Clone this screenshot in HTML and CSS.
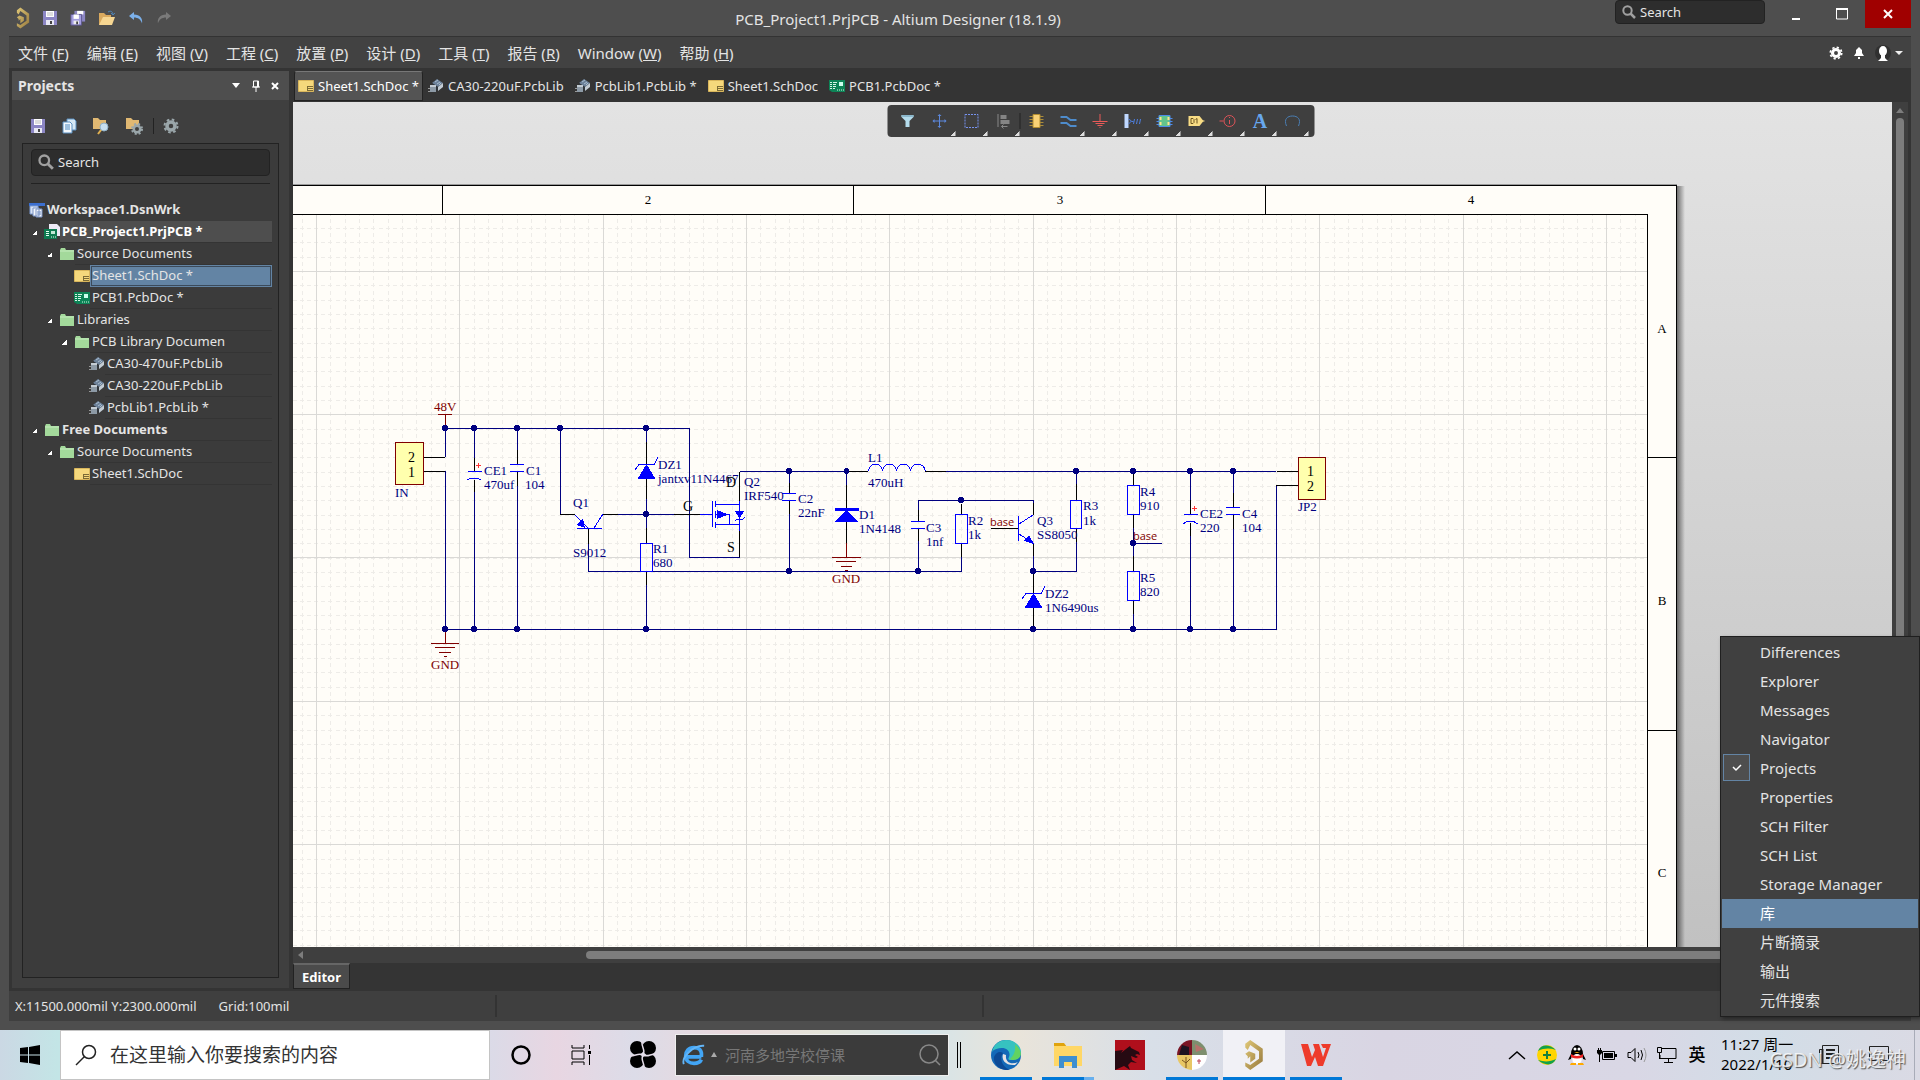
FILE: index.html
```html
<!DOCTYPE html>
<html lang="zh-CN">
<head>
	<meta charset="utf-8">
	<title>PCB_Project1.PrjPCB - Altium Designer (18.1.9)</title>
	<link rel="stylesheet" href="styles.css">
</head>
<body>
	<!-- shared icons -->
	<svg class="defs" width="0" height="0">
		<linearGradient id="gold" x1="0" y1="0" x2="1" y2="1"><stop offset="0" stop-color="#e0c878"/><stop offset="1" stop-color="#96783c"/></linearGradient>
		<symbol id="altium" viewBox="0 0 16 24"><path d="M1 6V3l4-3 10 7v10L5 24l-4-3v-3l4 2 7-5V9L5 4 3 8zM1 11l3-2 5 2v4l-4 3v-5l-2 2v-2z" fill="url(#gold)"/></symbol>
		<symbol id="save" viewBox="0 0 16 16"><path d="M1 1h14v14H1z" fill="#8c86c4"/><path d="M4 1h8v6H4z" fill="#fff"/><path d="M4 10h8v5H4z" fill="#e8e8f4"/><path d="M8 11h2v3H8z" fill="#444"/><path d="M5 3h6M5 5h6" stroke="#bbb"/></symbol>
		<symbol id="saveall" viewBox="0 0 18 18"><path d="M5 1h12v12H5z" fill="#8c86c4"/><path d="M8 1h7v4H8z" fill="#fff"/><path d="M1 5h12v12H1z" fill="#a49ee0" stroke="#5a568c"/><path d="M4 5h6v5H4z" fill="#fff"/><path d="M4 12h6v4H4z" fill="#eee"/><path d="M7 13h2v3H7z" fill="#444"/></symbol>
		<symbol id="open" viewBox="0 0 18 16"><path d="M1 15V3h5l2 2h5v3" fill="#d9a95e"/><path d="M1 15l4-8h12l-3 8z" fill="#f6d692"/><path d="M10 2c3-2 5 0 5 3m-2-2l2 2 2-2" fill="none" stroke="#4d83b5"/></symbol>
		<symbol id="undo" viewBox="0 0 16 14"><path d="M6 1L1 5l5 4V6.500c4 0 7 2 8 6 1-5-2-9-8-9z" fill="#7bb0ea"/></symbol>
		<symbol id="redo" viewBox="0 0 16 14"><path d="M10 1l5 4-5 4V6.500c-4 0-7 2-8 6-1-5 2-9 8-9z" fill="#7a7a7a"/></symbol>
		<symbol id="mag" viewBox="0 0 14 14"><circle cx="5.500" cy="5.500" r="4.200" fill="none" stroke="#a0a0a0" stroke-width="2"/><path d="M8.500 8.500l4.500 4.500" stroke="#a0a0a0" stroke-width="2.500"/></symbol>
		<symbol id="docs" viewBox="0 0 16 16"><path d="M6 1h7l2 2v9H6z" fill="#d5e8f5" stroke="#5b8fc0"/><path d="M2 4h7l2 2v9H2z" fill="#f2f8fd" stroke="#5b8fc0"/><path d="M4 7h5M4 9h5M4 11h5" stroke="#4a87be"/></symbol>
		<symbol id="fmag" viewBox="0 0 18 18"><path d="M1 12V1h5l2 2h6v9z" fill="#e0b872"/><circle cx="12" cy="10" r="4" fill="#c8dff0" stroke="#8fb0c8"/><path d="M9 13l-3 4" stroke="#e0b050" stroke-width="2"/></symbol>
		<symbol id="fgear" viewBox="0 0 18 18"><path d="M1 12V1h5l2 2h6v9z" fill="#e0b872"/><circle cx="12" cy="12" r="4.500" fill="#9aa6aa"/><circle cx="12" cy="12" r="5" fill="none" stroke="#9aa6aa" stroke-width="2" stroke-dasharray="2 2"/><circle cx="12" cy="12" r="2" fill="#3f3f3f"/></symbol>
		<symbol id="gear" viewBox="0 0 16 16"><circle cx="8" cy="8" r="4" fill="none" stroke="currentColor" stroke-width="3.500"/><circle cx="8" cy="8" r="6.500" fill="none" stroke="currentColor" stroke-width="2" stroke-dasharray="2.600 2.500"/></symbol>
		<symbol id="sch" viewBox="0 0 16 12"><path d="M.5.5h15v11H.5z" fill="#f5d87c" stroke="#d9b65c"/><path d="M9 6h6v5H9z" fill="#7b6a35"/><path d="M10 7.500h5M10 9.500h5" stroke="#f5d87c"/></symbol>
		<symbol id="pcb" viewBox="0 0 16 12"><path d="M0 0h16v12H3L0 10z" fill="#0d8457"/><path d="M1 2.500h2m1 0h4M1 4.500h2m1 0h3M1 6.500h2m1 0h3M1 8.500h2m1 0h2M8 10h1m1 0h1m1 0h1m1 0h1" stroke="#d6f5e6"/><path d="M10 2h4v4h-4z" fill="#cfe"/></symbol>
		<symbol id="lib" viewBox="0 0 16 14"><path d="M4 4l5-4 6 4-5 4z" fill="#6c8199"/><path d="M7 3l3-2M9 5l3-2M11 6l2-2" stroke="#a9bdd0"/><path d="M4 4l6 4v4L4 8z" fill="#30363c"/><path d="M10 8l5-4v4l-5 4z" fill="#c3ccd4"/><path d="M2 6h6v7H2z" fill="#8d9aa6"/><path d="M2 6h6v2H2z" fill="#c3ccd4"/><path d="M0 9.500h2M0 12.500h2" stroke="#999"/></symbol>
		<symbol id="folder" viewBox="0 0 16 12"><path d="M1 12V2l1-2h4l1 2h8v10z" fill="#a3d99b"/><path d="M1 3h14" stroke="#c5ecbf"/></symbol>
		<symbol id="wrk" viewBox="0 0 16 16"><path d="M0 1h16v3H0z" fill="#3b6fd0"/><path d="M1 4h8v8H1z" fill="#d7e3f5" stroke="#7d9ad0"/><path d="M4 6h6v8H4zM7 7h6v8H7z" fill="#f3f7fd" stroke="#7b93c4"/><path d="M8 10h4M8 12h4" stroke="#6d8ac0"/></symbol>
		<symbol id="prj" viewBox="0 0 16 16"><path d="M5 0h8l3 3v9H5z" fill="#ece9f5"/><path d="M0 5h13v10H0z" fill="#0d7a50"/><path d="M2 7.500h3M2 9.500h3M2 11.500h3M7 13h1m1 0h1m1 0h1" stroke="#e6fff3"/><path d="M7 7h4v3H7z" fill="#bfe8d5"/></symbol>
	</svg>

	<div class="window">
		<header class="titlebar">
			<div class="quick">
				<svg width="14" height="24"><use href="#altium"/></svg>
				<button aria-label="Save"><svg width="16" height="16"><use href="#save"/></svg></button>
				<button aria-label="Save all"><svg width="16" height="18"><use href="#saveall"/></svg></button>
				<button aria-label="Open"><svg width="18" height="16"><use href="#open"/></svg></button>
				<button aria-label="Undo"><svg width="16" height="14"><use href="#undo"/></svg></button>
				<button aria-label="Redo"><svg width="16" height="14"><use href="#redo"/></svg></button>
			</div>
			<h1>PCB_Project1.PrjPCB - Altium Designer (18.1.9)</h1>
			<div class="title-right">
				<label class="search top-search"><svg width="14" height="14"><use href="#mag"/></svg><input type="text" placeholder="Search" aria-label="Search"></label>
				<button class="win" aria-label="Minimize"><svg width="12" height="12"><path d="M2 11h8" stroke="#fff" stroke-width="2"/></svg></button>
				<button class="win" aria-label="Maximize"><svg width="12" height="12"><path d="M.5 1h11v10H.5z" fill="none" stroke="#fff"/><path d="M0 1h12" stroke="#fff" stroke-width="2"/></svg></button>
				<button class="win close" aria-label="Close"><svg width="12" height="12"><path d="M2 2l8 8M10 2l-8 8" stroke="#fff" stroke-width="2"/></svg></button>
			</div>
		</header>

		<nav class="menubar">
			<button>文件 (<u>F</u>)</button>
			<button>编辑 (<u>E</u>)</button>
			<button>视图 (<u>V</u>)</button>
			<button>工程 (<u>C</u>)</button>
			<button>放置 (<u>P</u>)</button>
			<button>设计 (<u>D</u>)</button>
			<button>工具 (<u>T</u>)</button>
			<button>报告 (<u>R</u>)</button>
			<button>Window (<u>W</u>)</button>
			<button>帮助 (<u>H</u>)</button>
			<div class="account">
				<svg width="14" height="14"><use href="#gear"/></svg>
				<svg width="12" height="14" viewBox="0 0 12 14"><path d="M1 10h10L9 7V4L6 1 3 4v3zM5 11h2v2H5z" fill="#fff"/></svg>
				<svg width="28" height="16" viewBox="0 0 28 16"><circle cx="8" cy="8" r="8" fill="#303030"/><ellipse cx="8" cy="6" rx="4" ry="5" fill="#fff"/><path d="M6 9h4v4l3 3H3l3-3z" fill="#fff"/><path d="M20 6h8l-4 4z" fill="#eee"/></svg>
			</div>
		</nav>

		<main class="work">
			<aside class="panel">
				<div class="panel-head">
					<h2>Projects</h2>
					<svg width="48" height="12" viewBox="0 0 48 12"><path d="M1 3h8L5 8z" fill="#fff"/><path d="M21 7h8M25 7v5M22.500 1h5v6h-5z" fill="none" stroke="#fff"/><path d="M26.500 1v6" stroke="#fff"/><path d="M41 3l6 6M47 3l-6 6" stroke="#fff" stroke-width="2"/></svg>
				</div>
				<div class="panel-tools">
					<button aria-label="Save"><svg width="16" height="16"><use href="#save"/></svg></button>
					<button aria-label="Compile"><svg width="16" height="16"><use href="#docs"/></svg></button>
					<button aria-label="Explore"><svg width="18" height="18"><use href="#fmag"/></svg></button>
					<button aria-label="Project options"><svg width="18" height="18"><use href="#fgear"/></svg></button>
					<span class="sep"></span>
					<button aria-label="Settings"><svg width="16" height="16"><use href="#gear"/></svg></button>
				</div>
				<div class="tree-box">
					<label class="search"><svg width="16" height="16"><use href="#mag"/></svg><input type="text" placeholder="Search" aria-label="Search projects"></label>
					<hr>
					<ul class="tree">
						<li class="l0 bold"><i></i><svg width="16" height="16"><use href="#wrk"/></svg><a href="#">Workspace1.DsnWrk</a></li>
						<li class="l1 bold current"><i class="arrow"></i><svg width="16" height="16"><use href="#prj"/></svg><a href="#">PCB_Project1.PrjPCB *</a></li>
						<li class="l2"><i class="arrow"></i><svg width="16" height="12"><use href="#folder"/></svg><a href="#">Source Documents</a></li>
						<li class="l3 selected"><i></i><svg width="16" height="12"><use href="#sch"/></svg><a href="#">Sheet1.SchDoc *</a></li>
						<li class="l3"><i></i><svg width="16" height="12"><use href="#pcb"/></svg><a href="#">PCB1.PcbDoc *</a></li>
						<li class="l2"><i class="arrow"></i><svg width="16" height="12"><use href="#folder"/></svg><a href="#">Libraries</a></li>
						<li class="l3"><i class="arrow"></i><svg width="16" height="12"><use href="#folder"/></svg><a href="#">PCB Library Documen</a></li>
						<li class="l4"><i></i><svg width="16" height="14"><use href="#lib"/></svg><a href="#">CA30-470uF.PcbLib</a></li>
						<li class="l4"><i></i><svg width="16" height="14"><use href="#lib"/></svg><a href="#">CA30-220uF.PcbLib</a></li>
						<li class="l4"><i></i><svg width="16" height="14"><use href="#lib"/></svg><a href="#">PcbLib1.PcbLib *</a></li>
						<li class="l1 bold"><i class="arrow"></i><svg width="16" height="12"><use href="#folder"/></svg><a href="#">Free Documents</a></li>
						<li class="l2"><i class="arrow"></i><svg width="16" height="12"><use href="#folder"/></svg><a href="#">Source Documents</a></li>
						<li class="l3"><i></i><svg width="16" height="12"><use href="#sch"/></svg><a href="#">Sheet1.SchDoc</a></li>
					</ul>
				</div>
			</aside>

			<section class="editor">
				<div class="tabs">
					<button class="active"><svg width="16" height="12"><use href="#sch"/></svg>Sheet1.SchDoc *</button>
					<button><svg width="16" height="14"><use href="#lib"/></svg>CA30-220uF.PcbLib</button>
					<button><svg width="16" height="14"><use href="#lib"/></svg>PcbLib1.PcbLib *</button>
					<button><svg width="16" height="12"><use href="#sch"/></svg>Sheet1.SchDoc</button>
					<button><svg width="16" height="12"><use href="#pcb"/></svg>PCB1.PcbDoc *</button>
				</div>
				<div class="view">
					<div class="canvas">
						<svg class="sheet" width="1599" height="845" viewBox="293 102 1599 845">
							<defs>
								<pattern id="minor" x="316" y="271" width="43" height="43" patternUnits="userSpaceOnUse">
									<path d="M.5 0v43M14.500 0v43M29.500 0v43M0 .5h43M0 14.500h43M0 29.500h43" stroke="#eeece8" stroke-dasharray="4 3.167" stroke-dashoffset="2"/>
								</pattern>
								<pattern id="major" x="316" y="271" width="430" height="430" patternUnits="userSpaceOnUse">
									<path d="M.5 0v430M143.500 0v430M287.500 0v430M0 .5h430M0 143.500h430M0 286.500h430" stroke="#dad9d6"/>
								</pattern>
								<linearGradient id="shade"><stop offset="0" stop-color="#000" stop-opacity=".5"/><stop offset="1" stop-color="#000" stop-opacity="0"/></linearGradient>
							</defs>

							<!-- sheet frame -->
							<path d="M1677 186h8v770h-8z" fill="url(#shade)"/>
							<path d="M293 184h1384" stroke="#999"/>
							<path d="M280 185.500h1396.500v780H280z" fill="#fffdf8" stroke="#000"/>
							<path d="M293 215h1354v740H293z" fill="url(#minor)"/>
							<path d="M293 215h1354v740H293z" fill="url(#major)"/>
							<path d="M280 214.500h1367.500v740M442.500 186v28M853.500 186v28M1265.500 186v28M1648 457.500h28M1648 730.500h28" fill="none" stroke="#000"/>
							<g class="zone">
								<text x="648" y="204">2</text><text x="1060" y="204">3</text><text x="1471" y="204">4</text>
								<text x="1662" y="333">A</text><text x="1662" y="605">B</text><text x="1662" y="877">C</text>
							</g>

							<!-- wires -->
							<g class="wire">
								<path d="M445.500 457V428.500H689.500V557.500H739.500M445.500 471V629.500H1276.500V485.500M474.500 428v30M474.500 492v137M517.500 428v22M517.500 486v143M560.500 428v86"/>
								<path d="M618 514.500h56M588.500 544v27.500H961.500V557M646.500 428v14M646.500 499v29M646.500 585v44"/>
								<path d="M740 471.500h107M946 471.500h330M789.500 471v12M789.500 514v57M846.500 471v14"/>
								<path d="M918.500 510V500.500H1033.500V503M918.500 541v30M1033.500 556v15.500H1076.500V542M1076.500 471v13"/>
								<path d="M1133.500 528v28M1133.500 543.500H1162M1133.500 614v15M1190.500 471v29M1190.500 536v93M1233.500 471v22M1233.500 529v100"/>
							</g>

							<!-- component pins -->
							<g class="pin">
								<path d="M424 457.500h21M424 471.500h21M474.500 458v13M474.500 480v12M517.500 450v14M517.500 472v14M560 514.500h15M603 514.500h15M588.500 529v15"/>
								<path d="M646.500 442v22M646.500 479v20M646.500 528v15M646.500 572v13M674 514.500h26M739.500 472v29M739.500 531v26"/>
								<path d="M789.500 483v10M789.500 501v13M846.500 485v23M846.500 522v21M847 471.500h21M925 471.500h21M918.500 510v11M918.500 529v12M961.500 504v10M961.500 544v13"/>
								<path d="M991 528.500h27M1033.500 503v12M1033.500 543v13M1076.500 484v16M1076.500 529v13M1033.500 572v21M1033.500 608v21"/>
								<path d="M1133.500 474v11M1133.500 515v13M1133.500 556v15M1133.500 601v13M1190.500 500v14M1190.500 523v13M1233.500 493v14M1233.500 515v14M1277 471.500h21M1276 485.500h22"/>
							</g>

							<!-- component bodies -->
							<g class="part">
								<path d="M468 471.500h14M467 480q7-4 14 0M510 464.500h14M510 471.500h14M1184 514.500h14M1183 524q7-6 15 0M1226 507.500h14M1226 514.500h14"/>
								<path d="M782 493.500h14M782 500.500h14M911 521.500h14M911 528.500h14"/>
								<path d="M575 515l13 13M577 528.500h25M594 528l9-14M635 470l4-5.500h15l4-7M1022 599l4-5.500h15l4-7"/>
								<path d="M640.500 543.500h12v28h-12zM955.500 514.500h12v29h-12zM1070.500 500.500h11v28h-11zM1127.500 485.500h12v29h-12zM1127.500 571.500h12v29h-12z"/>
								<path d="M700 514.500h12M712.500 501v26M715.500 501v6M715.500 511v7M715.500 522v6M716 504.500h24M716 514.500h13v10M716 524.500h24M739.500 501v30M735 521l2-2h6l2-2"/>
								<path d="M868.500 471c1-9 13-9 14 0c1-9 13-9 14 0c1-9 13-9 14 0c1-9 13-9 15 0"/>
								<path d="M1018.500 516v25M1019 524l14-9M1019 534l14 9"/>
							</g>
							<g fill="#00f">
								<path d="M585 528l-9-3 7-6zM646.500 464l9 15h-18zM717 510l11 4.500-11 4.500zM735 511h9l-4.500 8zM835 508h24v3H835zM846.500 510l12.500 12h-25zM1034 544l-10-3 5-6zM1033.500 593l9 15h-18z"/>
							</g>

							<g class="power">
								<path d="M438 414.500h14M445.500 414v14M445.500 630v13M431 643.500h28M435 647.500h20M439 652.500h12M444 656.500h3M846.500 543v14M832 557.500h29M836 561.500h20M841 566.500h11M845 570.500h3"/>
								<path d="M395.500 442.500h28v42h-28zM1298.500 457.500h27v42h-27z" fill="#ffffae"/>
							</g>
							<path d="M476 465.500h5M478.500 463v5M1192 508.500h5M1194.500 506v5" stroke="#f33"/>

							<!-- junctions -->
							<path class="dots" d="M445 428h0M474 428h0M517 428h0M560 428h0M646 428h0M646 514h0M445 629h0M474 629h0M517 629h0M646 629h0M789 471h0M846.500 471h0M789 571h0M918 571h0M961 500h0M1033 571h0M1033 629h0M1076 471h0M1133 471h0M1190 471h0M1233 471h0M1133 543h0M1133 629h0M1190 629h0M1233 629h0"/>

							<g class="name">
								<text x="395" y="497">IN</text><text x="484" y="475">CE1</text><text x="484" y="489">470uf</text>
								<text x="526" y="475">C1</text><text x="525" y="489">104</text>
								<text x="573" y="507">Q1</text><text x="573" y="557">S9012</text>
								<text x="658" y="469">DZ1</text><text x="658" y="483">jantxv11N4467</text>
								<text x="744" y="486">Q2</text><text x="744" y="500">IRF540</text>
								<text x="653" y="553">R1</text><text x="653" y="567">680</text>
								<text x="798" y="503">C2</text><text x="798" y="517">22nF</text>
								<text x="859" y="519">D1</text><text x="859" y="533">1N4148</text>
								<text x="868" y="462">L1</text><text x="868" y="487">470uH</text>
								<text x="926" y="532">C3</text><text x="926" y="546">1nf</text>
								<text x="968" y="525">R2</text><text x="968" y="539">1k</text>
								<text x="1037" y="525">Q3</text><text x="1037" y="539">SS8050</text>
								<text x="1083" y="510">R3</text><text x="1083" y="525">1k</text>
								<text x="1045" y="598">DZ2</text><text x="1045" y="612">1N6490us</text>
								<text x="1140" y="496">R4</text><text x="1140" y="510">910</text>
								<text x="1140" y="582">R5</text><text x="1140" y="596">820</text>
								<text x="1200" y="518">CE2</text><text x="1200" y="532">220</text>
								<text x="1242" y="518">C4</text><text x="1242" y="532">104</text>
								<text x="1298" y="511">JP2</text>
							</g>
							<g class="pinname">
								<text x="408" y="462">2</text><text x="408" y="477">1</text>
								<text x="1307" y="476">1</text><text x="1307" y="491">2</text>
								<text x="683" y="511">G</text><text x="726" y="487">D</text><text x="727" y="552">S</text>
							</g>
							<g class="net">
								<text x="434" y="411">48V</text><text x="431" y="669">GND</text><text x="832" y="583">GND</text>
								<text class="label" x="990" y="526">base</text><text class="label" x="1133" y="540">base</text>
							</g>
						</svg>
					</div>
					<div class="vscroll"><i></i><b></b></div>
					<div class="active-bar">
						<button aria-label="Filter"><svg width="20" height="20"><path d="M4 4h12v2l-4 4v6H8v-6L4 6z" fill="#b5dcec"/><path d="M4 4h12v2H4z" fill="#8cb8cc"/></svg></button>
						<button class="more" aria-label="Move"><svg width="20" height="20"><path d="M10 4v12M4 10h12" fill="none" stroke="#5d88dc"/><path d="M10 3l2 2H8zM10 17l2-2H8zM3 10l2-2v4zM17 10l-2-2v4z" fill="#5d88dc"/></svg></button>
						<button class="more" aria-label="Select"><svg width="20" height="20"><path d="M3.500 3.500h13v13h-13z" fill="none" stroke="#7792ee" stroke-dasharray="2 1"/></svg></button>
						<button class="more" aria-label="Align"><svg width="20" height="20"><path d="M4.500 3v13" stroke="#888"/><path d="M7 4h6v4H7zM7 9h9v4H7z" fill="#848484"/><path d="M14 15.500H8M10 13.500l-2 2 2 2" fill="none" stroke="#888"/></svg></button>
						<span></span>
						<button aria-label="Place part"><svg width="20" height="20"><path d="M3 5.500h14M3 8.500h14M3 11.500h14M3 14.500h14" stroke="#a98b3c"/><path d="M6.500 3.500h7v13h-7z" fill="#f9d276" stroke="#b28d31"/></svg></button>
						<button class="more" aria-label="Place wire"><svg width="20" height="20"><path d="M2 6h6l4 3h6M2 12h6l4 3h6" fill="none" stroke="#4e8ccc" stroke-width="2"/></svg></button>
						<button class="more" aria-label="Power port"><svg width="20" height="20"><path d="M9.500 3v8M2 10.500h15M5 12.500h9M7 14.500h5M9 16.500h1" stroke="#ea5a58"/></svg></button>
						<button class="more" aria-label="Harness"><svg width="20" height="20"><path d="M2 3h4v14H2z" fill="#c0d8ff"/><path d="M6 8l3 2-3 3M9 10.500h2M11 13l1-5M14 13l1-5M17 13l1-5" fill="none" stroke="#4e7fe0"/></svg></button>
						<button class="more" aria-label="Sheet symbol"><svg width="20" height="20"><path d="M2 7.500h16M2 10.500h16M2 13.500h16" stroke="#4e8de8"/><path d="M4.500 4.500h11v11h-11z" fill="#63c48c" stroke="#4e8de8"/><path d="M5 6h2v3H5zM13 6h2v3h-2zM5 11h2v3H5zM13 11h2v3h-2z" fill="#ffe58c"/></svg></button>
						<button class="more" aria-label="Port"><svg width="20" height="20"><path d="M2 5h11l4 5-4 5H2z" fill="#f8dc84"/><path d="M14 10h4" stroke="#f8dc84"/><path d="M4.500 7.500v5h2l1-1v-3l-1-1zM9 8.500l1.500-1v5" fill="none" stroke="#6b5520"/></svg></button>
						<button class="more" aria-label="Directive"><svg width="20" height="20"><circle cx="11" cy="10" r="5.500" fill="none" stroke="#dd5358"/><path d="M1 10h4M11 9v4M11 6v1" stroke="#dd5358"/></svg></button>
						<button class="more letter" aria-label="Text">A</button>
						<button class="more" aria-label="Arc"><svg width="20" height="20"><path d="M4 15c-3-7 1-10 6-10s9 3 6 10" fill="none" stroke="#4b7fb4"/></svg></button>
					</div>
				</div>
				<div class="hscroll"><i></i><b></b></div>
				<div class="bottom-tabs"><button>Editor</button></div>
			</section>
		</main>

		<footer class="status">
			<span>X:11500.000mil Y:2300.000mil</span><span>Grid:100mil</span>
		</footer>
	</div>

	<div class="popup" role="menu">
		<button>Differences</button>
		<button>Explorer</button>
		<button>Messages</button>
		<button>Navigator</button>
		<button class="checked"><svg width="27" height="27"><path d="M9 12l3 3 5-5" fill="none" stroke="#fff" stroke-width="1.500"/></svg>Projects</button>
		<button>Properties</button>
		<button>SCH Filter</button>
		<button>SCH List</button>
		<button>Storage Manager</button>
		<button class="hover">库</button>
		<button>片断摘录</button>
		<button>输出</button>
		<button>元件搜索</button>
	</div>

	<div class="taskbar">
		<button class="start" aria-label="Start"><svg width="20" height="20"><path d="M0 3l8-1v7.500H0zM9 2l11-2v9.500H9zM0 10.500h8V18l-8-1zM9 10.500h11V20L9 18z" fill="#000"/></svg></button>
		<label class="win-search"><svg width="22" height="22" viewBox="0 0 22 22"><circle cx="14" cy="8" r="6.500" fill="none" stroke="#222" stroke-width="1.500"/><path d="M9.500 12.500L1 21" stroke="#222" stroke-width="1.500"/></svg><input type="text" placeholder="在这里输入你要搜索的内容" aria-label="搜索"></label>
		<div class="shell">
			<button aria-label="Cortana"><svg width="20" height="20"><circle cx="10" cy="10" r="8.500" fill="none" stroke="#000" stroke-width="2.500"/></svg></button>
			<button aria-label="Task view"><svg width="22" height="20"><path d="M1 0v3h12V0M1 6h12v8H1zM1 20v-3h12v3M18.500 0v4M18.500 10v10" fill="none" stroke="#000"/><path d="M17 6h3v3h-3z"/></svg></button>
			<button aria-label="Browser"><svg width="28" height="28" viewBox="0 0 28 28"><g><circle cx="8" cy="7" r="7"/><circle cx="20" cy="7" r="7"/><circle cx="8" cy="20" r="7"/><circle cx="20" cy="20" r="7"/></g><path d="M14 14C17 9 12 6 13 0M14 14c5 3 8-2 14-1M14 14c-3 5 2 8 1 14M14 14c-5-3-8 2-14 1" fill="none" stroke="#e4dce8" stroke-width="1.500"/></svg></button>
		</div>
		<label class="ie"><svg width="24" height="24" viewBox="0 0 26 24"><path d="M21 14H6M21 14c1-8-3-10-8-10-6 0-9 4-9 9s4 8 9 8c4 0 7-2 8-4" fill="none" stroke="#42a5f5" stroke-width="4"/><path d="M2 22C-1 15 12 1 24 2" fill="none" stroke="#64b5f6" stroke-width="2"/></svg><svg width="8" height="6"><path d="M4 0l3 5H1z" fill="#aaa"/></svg><input type="text" placeholder="河南多地学校停课" aria-label="热搜"><svg width="24" height="24"><circle cx="11" cy="11" r="9" fill="none" stroke="#888" stroke-width="1.500"/><path d="M17 17l5 5" stroke="#888" stroke-width="1.500"/></svg></label>
		<span class="grip"></span>
		<div class="apps">
			<button class="run" aria-label="Edge"><svg width="30" height="30" viewBox="0 0 30 30"><circle cx="15" cy="15" r="15" fill="#1469b8"/><path d="M1 12C3 3 10 0 15 0c9 0 15 6 15 12 0 5-4 8-10 8-3 0-3-1-2-3 2-5-2-9-7-9-4 0-8 1-10 4z" fill="#36c2c0"/><path d="M24 4c5 5 8 10 4 14-3 3-8 2-9 1 4-4 6-8 5-15z" fill="#62d360"/><path d="M12 14c-2 6 3 12 12 11l3-3c-6 3-13 1-12-7z" fill="#e4e2e4"/><path d="M12 13c-4 5-1 14 7 17-8 1-17-4-16-13 2-5 6-6 9-4z" fill="#0d4a96"/></svg></button>
			<button class="run multi" aria-label="Explorer"><svg width="28" height="26"><path d="M0 1h10l3 4H0z" fill="#e0a30d"/><path d="M0 4h28v20H0z" fill="#ffd766"/><path d="M5 26V14h18v12h-5v-6h-8v6z" fill="#3e8fd0"/></svg></button>
			<button aria-label="Dragon"><svg width="30" height="30"><path d="M0 0h30v30H0z" fill="#b00f1c"/><path d="M0 11l8-1-2 3 5-4 4-3 1 2 8 4 1 3-3-1-2 1 3 2-2 1-5-2 1 4 5 3-6-1-3 3 2 5-6-4-9 4z" fill="#260a12"/></svg></button>
			<button class="run" aria-label="Photos"><svg width="30" height="30"><clipPath id="round"><circle cx="15" cy="15" r="15"/></clipPath><g clip-path="url(#round)"><path d="M0 0h15v15H0z" fill="#7a1524"/><path d="M15 0h15v15H15z" fill="#7d8f6e"/><path d="M0 15h15v15H0z" fill="#e8c765"/><path d="M15 15h15v15H15z" fill="#fff"/><path d="M5 5l7 2v8H2z" fill="#1d1420"/><path d="M18 4l9 5-8 3z" fill="#b7726b"/><path d="M9 17v11M5 20l4 3 4-4" stroke="#7a5420" fill="none"/><path d="M22 19v5M20 21h4" stroke="#b45"/></g></svg></button>
			<button class="run focus" aria-label="Altium"><svg width="20" height="30"><use href="#altium"/></svg></button>
			<button class="run" aria-label="WPS"><svg width="30" height="26"><path d="M0 2h7l4 13 3-7-2-6h6l4 13 3-9h-3l-2-4h10l-8 22h-5l-3-9-4 9H6z" fill="#ee3b2b"/></svg></button>
		</div>
		<div class="tray">
			<svg width="20" height="10"><path d="M2 9l8-7 8 7" fill="none" stroke="#000" stroke-width="1.500"/></svg>
			<svg width="20" height="20"><circle cx="10" cy="10" r="10" fill="#ffd500"/><path d="M1 6C4-1 12-1 19 5c-6-2-12-2-18 1zM19 14c-3 7-11 7-18 1 6 2 12 2 18-1z" fill="#12a04c"/><path d="M10 6v8M6 10h8" stroke="#15803c" stroke-width="2"/></svg>
			<svg width="20" height="20" viewBox="-1 0 20 20"><ellipse cx="9" cy="9" rx="6" ry="9"/><path d="M3 9l-3 6 3-1zM15 9l3 6-3-1z"/><ellipse cx="9" cy="14" rx="5" ry="5" fill="#fff"/><path d="M3 9q6 4 12 0v3q-6 3-12 0z" fill="#e22"/><path d="M3 18h5v2H2zM10 18h5l1 2h-6z" fill="#fa0"/><circle cx="7" cy="4" r="1.500" fill="#fff"/><circle cx="11" cy="4" r="1.500" fill="#fff"/><path d="M6 7h6l-3 1z" fill="#fa0"/></svg>
			<svg width="20" height="14"><path d="M5.500 3.500h12v8h-12z" fill="none" stroke="#000"/><path d="M7 5h9v5H7zM18 6h2v3h-2zM0 2h5v3L3 7v7H2V7L0 5zM1 0h1v2H1zM3 0h1v2H3z"/></svg>
			<svg width="20" height="16"><path d="M1 5.500h3l4-4v13l-4-4H1zM11 5q2 3 0 6M14 3q3 5 0 10" fill="none" stroke="#000"/><path d="M17 1q4 7 0 14" fill="none" stroke="#999"/></svg>
			<svg width="20" height="16"><path d="M5 1.500h14v10H3V8M11.500 12v3M7 15.500h9M.5.500h4v5h-4zM2.500 6v6" fill="none" stroke="#000"/></svg>
			<b>英</b>
			<div class="clock"><span>11:27 周一</span><span>2022/1/10</span></div>
			<svg class="news" width="20" height="20"><path d="M3.500.5h16v18h-19v-14h3z" fill="none" stroke="#222"/><path d="M3.500 4v14M7 5h9M7 9h9M7 13h6" stroke="#222" stroke-width="2"/></svg>
			<svg width="20" height="18"><path d="M.5.5h19v14h-6l-3 3v-3H.5z" fill="none" stroke="#222"/></svg>
			<span class="desk"></span>
		</div>
	</div>
	<div class="watermark">CSDN @姚逸神</div>
</body>
</html>
```
FILE: styles.css
```css
* {
	box-sizing: border-box;
}

body {
	margin: 0;
	height: 100vh;
	display: flex;
	flex-direction: column;
	overflow: hidden;
	background: #4e4e4e;
	color: #e4e4e4;
	font: 13px/20px "Noto Sans", "Noto Sans CJK SC", sans-serif;
}

svg {
	display: block;
	flex: none;
}

button {
	padding: 0;
	border: 0;
	background: none;
	color: inherit;
	font: inherit;
}

input {
	flex: 1;
	min-width: 0;
	padding: 0;
	border: 0;
	background: none;
	color: inherit;
	font: inherit;
	outline: none;
}

input::placeholder {
	color: inherit;
	opacity: 1;
}

a {
	color: inherit;
	text-decoration: none;
}

.defs {
	position: absolute;
}

.window {
	flex: 1;
	min-height: 0;
	display: flex;
	flex-direction: column;
	padding: 0 9px 9px;
}

/* title bar */
.titlebar {
	display: flex;
	height: 37px;
	flex: none;
	border-bottom: 1px solid #333;
}

.titlebar h1 {
	flex: 1;
	margin: 0;
	text-align: center;
	font-size: 15px;
	font-weight: 400;
	line-height: 38px;
}

.quick {
	display: flex;
	align-items: center;
	gap: 12px;
	width: 172px;
	padding-left: 7px;
}

.title-right {
	display: flex;
	align-items: flex-start;
}

.search {
	display: flex;
	align-items: center;
	gap: 4px;
	height: 27px;
	padding: 0 6px 1px;
	background: #2d2d2d;
	border: 1px solid #222;
	border-radius: 4px;
}

.top-search {
	width: 150px;
	height: 24px;
	margin-right: 8px;
}

.win {
	width: 46px;
	height: 28px;
	display: grid;
	place-items: center;
}

.close {
	background: #a00000;
}

.menubar {
	display: flex;
	align-items: center;
	gap: 18px;
	height: 31px;
	flex: none;
	padding: 0 8px 0 9px;
	background: #424242;
	font-size: 15px;
}

.account {
	display: flex;
	align-items: center;
	gap: 10px;
	margin-left: auto;
	color: #fff;
}

/* work area */
.work {
	flex: 1;
	min-height: 0;
	display: flex;
	gap: 4px;
	padding: 3px 3px;
	background: #343434;
}

.panel {
	width: 277px;
	flex: none;
	display: flex;
	flex-direction: column;
	background: #3f3f3f;
}

.panel-head {
	display: flex;
	justify-content: space-between;
	align-items: center;
	height: 29px;
	padding: 0 10px 0 6px;
	background: #4e4e4e;
}

.panel-head h2 {
	margin: 0;
	font-size: 14px;
}

.panel-tools {
	display: flex;
	align-items: center;
	gap: 15px;
	height: 43px;
	padding: 8px 18px 0;
	color: #9aa6aa;
}

.panel-tools .sep {
	width: 1px;
	height: 16px;
	margin: 0 -6px 0 -5px;
	background: #222;
}

.tree-box {
	flex: 1;
	margin: 0 10px 10px;
	padding: 5px 8px;
	border: 1px solid #222;
	background: #3b3b3b;
}

.tree-box hr {
	margin: 7px 0 15px;
	border: 0;
	border-top: 1px solid #222;
}

.tree {
	margin: 0 -2px 0 -1px;
	padding: 0;
	list-style: none;
}

.tree li {
	display: flex;
	align-items: center;
	height: 22px;
}

.tree i {
	width: 14px;
	flex: none;
}

.tree .arrow::before {
	content: "";
	display: block;
	width: 5px;
	height: 5px;
	margin-left: 2px;
	background: linear-gradient(135deg, transparent 50%, #fff 50%);
}

.tree a {
	flex: 1;
	min-width: 0;
	height: 22px;
	padding-left: 2px;
	border-bottom: 1px solid #343434;
	white-space: nowrap;
}

.tree .l0 i {
	display: none;
}

.tree .l0 {
	margin-left: -1px;
}

.tree .l0 a {
	border: 0;
}

.tree .l2 {
	padding-left: 15px;
}

.tree .l3 {
	padding-left: 30px;
}

.tree .l4 {
	padding-left: 45px;
}

.tree .bold {
	font-weight: 700;
}

.tree .current a {
	background: #4e4e4e;
	color: #fff;
}

.tree .selected a {
	background: #6384a4;
	border: 1px solid #6384a4;
	padding-left: 1px;
	line-height: 18px;
	box-shadow: inset 0 0 0 1px #3b4a5a;
}

.editor {
	flex: 1;
	min-width: 0;
	display: flex;
	flex-direction: column;
	margin-bottom: -3px;
}

.tabs {
	display: flex;
	height: 31px;
	flex: none;
	padding-bottom: 1px;
}

.tabs button {
	display: flex;
	align-items: center;
	gap: 4px;
	padding: 0 6px 0 5px;
}

.tabs .active {
	margin-left: 1px;
	border: 1px solid #222;
	border-top-color: #777;
	border-radius: 3px 3px 0 0;
	background: #545454;
	color: #fff;
	padding: 0 3px;
}

.view {
	position: relative;
	flex: 1;
	min-height: 0;
	display: flex;
}

.canvas {
	flex: 1;
	min-width: 0;
	overflow: hidden;
	background: linear-gradient(#e3e3e3, #c1c1c1);
}

.vscroll {
	width: 16px;
	background: #3f3f3f;
	padding: 6px 4px 0;
	display: flex;
	flex-direction: column;
	gap: 5px;
}

.vscroll i {
	border: 4px solid transparent;
	border-top: 0;
	border-bottom: 5px solid #7d7d7d;
}

.vscroll b {
	flex: 1;
	background: #7d7d7d;
	border-radius: 4px 4px 0 0;
}

.hscroll {
	display: flex;
	align-items: center;
	height: 16px;
	flex: none;
	padding: 0 10px 0 5px;
	background: #3f3f3f;
}

.hscroll i {
	border: 4px solid transparent;
	border-left: 0;
	border-right: 5px solid #7d7d7d;
}

.hscroll b {
	height: 8px;
	width: 82%;
	margin-left: auto;
	background: #7d7d7d;
	border-radius: 4px;
}

.bottom-tabs {
	height: 28px;
	flex: none;
}

.bottom-tabs button {
	height: 26px;
	padding: 0 8px;
	background: #4b4b4b;
	border: 1px solid #222;
	border-top: 2px solid #666;
	color: #fff;
	font-weight: 700;
}

/* schematic */
.sheet {
	font-family: "Liberation Serif", serif;
	shape-rendering: crispEdges;
}

.zone {
	font-size: 13px;
	text-anchor: middle;
}

.wire, .pin, .part, .power {
	fill: none;
	stroke: #000080;
}

.pin {
	stroke: #000;
}

.part {
	stroke: #0000ff;
}

.power {
	stroke: #800000;
}

.dots {
	stroke: #000080;
	stroke-width: 6;
	stroke-linecap: round;
}

.name {
	font-size: 13px;
	fill: #000080;
}

.pinname {
	font-size: 14px;
}

.net {
	font-size: 13px;
	fill: #800000;
}

.net .label {
	font: 11px "Open Sans", sans-serif;
}

/* floating toolbar */
.active-bar {
	position: absolute;
	top: 3px;
	left: 50%;
	transform: translateX(-50%);
	display: flex;
	align-items: center;
	height: 32px;
	padding: 0 6px 0 4px;
	background: #3f3f3f;
	border-radius: 4px;
}

.active-bar button {
	width: 32px;
	height: 32px;
	display: grid;
	place-items: center;
}

.active-bar span {
	width: 1px;
	height: 16px;
	background: #222;
}

.active-bar .more {
	background: linear-gradient(135deg, transparent 50%, #ddd 50%) 27px 26px / 5px 5px no-repeat;
}

.active-bar .letter {
	color: #67a7ee;
	font: 700 20px/32px "Liberation Serif", serif;
}

.status {
	display: flex;
	align-items: center;
	gap: 22px;
	height: 30px;
	flex: none;
	padding-left: 6px;
	background: linear-gradient(#333, #333) 486px 50% / 2px 22px no-repeat, linear-gradient(#333, #333) 973px 50% / 2px 22px no-repeat, #3f3f3f;
}

.popup {
	position: absolute;
	right: 0;
	bottom: 63px;
	width: 200px;
	padding: 1px;
	background: #404040;
	border: 1px solid #1f1f1f;
	box-shadow: 2px 2px 4px rgba(0, 0, 0, 0.4);
	font-size: 15px;
}

.popup button {
	display: flex;
	align-items: center;
	width: 100%;
	height: 29px;
	padding: 0 0 2px 38px;
}

.popup .checked {
	padding-left: 1px;
	gap: 10px;
}

.popup .checked svg {
	background: #4e4e4e;
	border: 1px solid #6384a4;
}

.popup .hover {
	background: #6384a4;
	color: #fff;
}

/* windows taskbar */
.taskbar {
	display: flex;
	height: 50px;
	flex: none;
	background: linear-gradient(90deg, #cbd8e4, #c3e5e6 3%, #d9dbe8 25%, #e8d6e2 29%, #dcdce8 33%, #ead8dc 38%, #e4e4d8 43%, #d4e4ea 48%, #e9e4da 53%, #d8dfe8 60%, #d9d5e3 72%, #d9d7e5 85%, #d2dde7 92%, #dadae4);
	color: #000;
}

.start {
	width: 60px;
	display: grid;
	place-items: center;
}

.win-search {
	display: flex;
	align-items: center;
	gap: 13px;
	width: 430px;
	padding: 0 14px;
	background: #fff;
	border: 1px solid #c4c4c4;
	color: #333;
	font-size: 19px;
}

.shell {
	display: flex;
	width: 183px;
}

.shell button {
	flex: 1;
	display: grid;
	place-items: center;
}

.ie {
	display: flex;
	align-items: center;
	gap: 4px;
	width: 274px;
	height: 42px;
	margin: 4px 0 0 2px;
	padding: 0 6px;
	background: #3b3b3b;
	border: 1px solid #eee;
	color: #777;
	font-size: 15px;
}

.ie input {
	margin-left: 3px;
}

.grip {
	width: 4px;
	height: 26px;
	margin: 12px 14px 0 8px;
	border: 1px solid #000;
	border-width: 0 1px;
}

.apps {
	display: flex;
}

.apps button {
	width: 62px;
	padding-top: 3px;
	display: grid;
	justify-items: center;
	align-items: center;
	border: solid transparent;
	border-width: 0 5px 3px;
}

.apps .run {
	border-image: linear-gradient(#0078d7, #0078d7) 1;
	border-image-width: 0 0 3px;
	border-left-width: 0;
	border-right-width: 0;
	width: 52px;
	margin: 0 5px;
}

.apps .multi {
	border-image-source: linear-gradient(90deg, #0078d7 80%, #68b0ee 80%);
}

.apps .focus {
	width: 62px;
	margin: 0;
	background: #f1f1f6;
}

.tray {
	display: flex;
	align-items: center;
	gap: 10px;
	margin-left: auto;
}

.tray b {
	width: 20px;
	text-align: center;
	font-size: 17px;
	font-weight: 500;
}

.clock {
	display: flex;
	flex-direction: column;
	width: 76px;
	margin: 0 12px 2px 4px;
	font-size: 15px;
	white-space: nowrap;
}

.news {
	margin-right: 20px;
}

.desk {
	width: 6px;
	height: 50px;
	margin-left: 15px;
	border-left: 1px solid #a8acb8;
}

.watermark {
	position: absolute;
	right: 14px;
	bottom: 8px;
	color: rgba(255, 255, 255, 0.8);
	font-size: 20px;
	line-height: 24px;
	text-shadow: 1px 1px 1px #555;
}
```
